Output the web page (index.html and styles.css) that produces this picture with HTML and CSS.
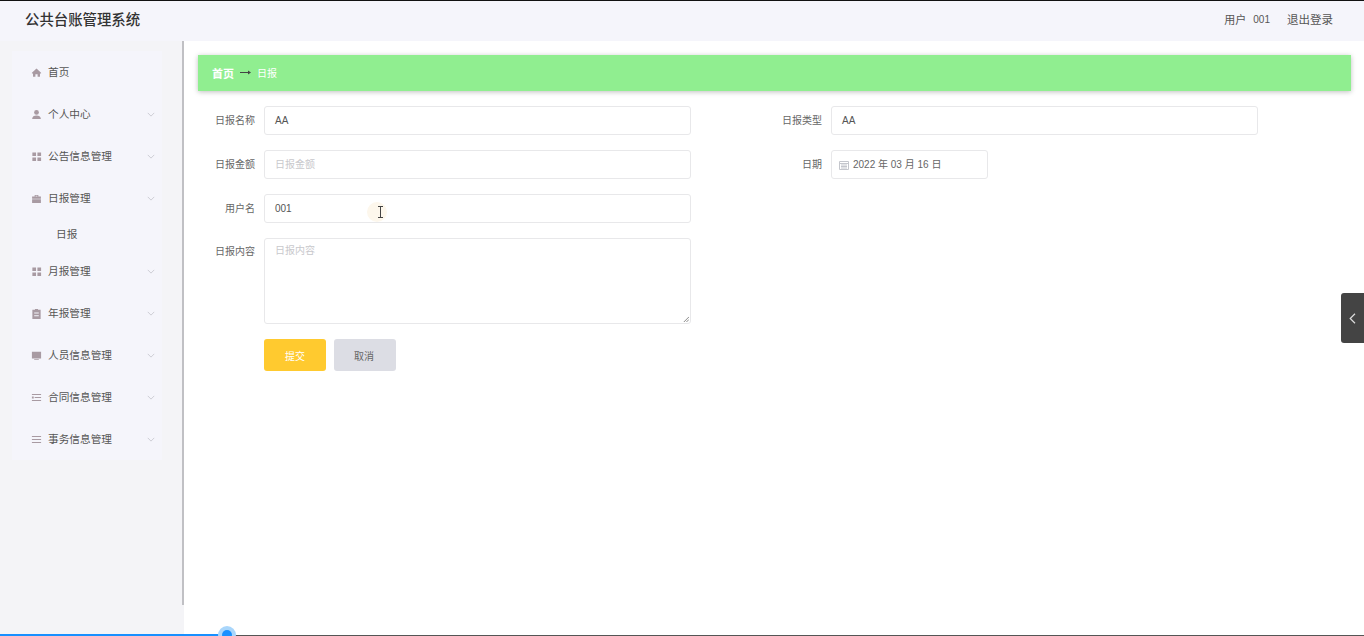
FILE: index.html
```html
<!DOCTYPE html>
<html lang="zh-CN">
<head>
<meta charset="utf-8">
<title>公共台账管理系统</title>
<link rel="stylesheet" href="styles.css">
</head>
<body>
<div class="app">
  <header class="topbar">
    <div class="brand">公共台账管理系统</div>
    <div class="userbox"><div class="who"><span>用户</span><span class="uid">001</span></div><span class="logout">退出登录</span></div>
  </header>
  <div class="body-row">
    <aside class="sidebar">
      <nav class="menu">
        <div class="item"><svg class="ico" viewBox="0 0 12 12"><path d="M6 1.500 1 6.200V7h1.200v3.500h2.600V8h2.400v2.500h2.600V7H11v-.8z"/></svg><span class="label">首页</span></div>
        <div class="item"><svg class="ico" viewBox="0 0 12 12"><circle cx="6" cy="3.700" r="2.600"/><path d="M1.200 10.800C1.400 8.200 3.200 7 6 7s4.600 1.200 4.800 3.800z"/></svg><span class="label">个人中心</span><svg class="chev" viewBox="0 0 10 6"><path d="M1 1l4 4 4-4"/></svg></div>
        <div class="item"><svg class="ico" viewBox="0 0 12 12"><path d="M1.500 1.500h4v4h-4zM7 1.500h4v4H7zM1.500 7h4v4h-4zM7 7h4v4H7z"/></svg><span class="label">公告信息管理</span><svg class="chev" viewBox="0 0 10 6"><path d="M1 1l4 4 4-4"/></svg></div>
        <div class="item"><svg class="ico" viewBox="0 0 12 12"><path d="M4 2.200h4v1.500h2.800v2.500H1.200V3.700H4zM5 3v.7h2V3zM1.200 6.900h9.600v3.900H1.200z"/></svg><span class="label">日报管理</span><svg class="chev" viewBox="0 0 10 6"><path d="M1 1l4 4 4-4"/></svg></div>
        <div class="sub">日报</div>
        <div class="item"><svg class="ico" viewBox="0 0 12 12"><path d="M1.500 1.500h4v4h-4zM7 1.500h4v4H7zM1.500 7h4v4h-4zM7 7h4v4H7z"/></svg><span class="label">月报管理</span><svg class="chev" viewBox="0 0 10 6"><path d="M1 1l4 4 4-4"/></svg></div>
        <div class="item"><svg class="ico" viewBox="0 0 12 12"><path fill-rule="evenodd" d="M4.300 1h3.400v1H10.500v10h-9V2h2.800zM3.500 5v1h5V5zM3.500 8v1h5V8z"/></svg><span class="label">年报管理</span><svg class="chev" viewBox="0 0 10 6"><path d="M1 1l4 4 4-4"/></svg></div>
        <div class="item"><svg class="ico" viewBox="0 0 12 12"><path d="M1 1.800h10v7.400H1zM3.500 10h5v1h-5z"/></svg><span class="label">人员信息管理</span><svg class="chev" viewBox="0 0 10 6"><path d="M1 1l4 4 4-4"/></svg></div>
        <div class="item"><svg class="ico" viewBox="0 0 12 12"><path d="M1 2.300h10v1H1zM4 5.500h7v1H4zM1 8.700h10v1H1zM1 5h2v2H1z"/></svg><span class="label">合同信息管理</span><svg class="chev" viewBox="0 0 10 6"><path d="M1 1l4 4 4-4"/></svg></div>
        <div class="item"><svg class="ico" viewBox="0 0 12 12"><path d="M1 2.300h10v1H1zM1 5.500h10v1H1zM1 8.700h10v1H1z"/></svg><span class="label">事务信息管理</span><svg class="chev" viewBox="0 0 10 6"><path d="M1 1l4 4 4-4"/></svg></div>
      </nav>
      <div class="scrolltrack"><div class="scrollthumb"></div></div>
    </aside>
    <main class="content">
      <div class="crumb"><span class="crumb-home">首页</span><svg class="crumb-arrow" viewBox="0 0 11 7"><path d="M0 3h8V1.500L11 3.500 8 5.500V4H0z"/></svg><span class="crumb-cur">日报</span></div>
      <form class="form">
        <div class="field"><label>日报名称</label><div class="input">AA</div></div>
        <div class="field"><label>日报类型</label><div class="input">AA</div></div>
        <div class="field"><label>日报金额</label><div class="input ph">日报金额</div></div>
        <div class="field"><label>日期</label><div class="input date"><svg class="cal" viewBox="0 0 10 10"><path d="M.5 1.500h9v8h-9zM.5 3.500h9M2 5h6M2 6.500h6M2 8h6"/></svg>2022 年 03 月 16 日</div></div>
        <div class="field"><label>用户名</label><div class="input">001</div></div>
        <div class="spacer"></div>
        <div class="field tall"><label>日报内容</label><div class="input area ph">日报内容<svg class="grip" viewBox="0 0 7 7"><path d="M1 7l6-6M4 7l3-3"/></svg></div></div>
        <div class="spacer"></div>
        <div class="actions"><div class="btn ok">提交</div><div class="btn no">取消</div></div>
      </form>
    </main>
  </div>
</div>
<div class="cursor"><div class="halo"></div><svg class="ibeam" viewBox="0 0 7 12"><path d="M1 .5h5M3.500.5v11M1 11.500h5"/></svg></div>
<div class="drawer"><svg viewBox="0 0 7 11"><path d="M6 .8 1.200 5.500 6 10.200"/></svg></div>
<div class="progress"><div class="played"></div><div class="rest"></div><div class="knob"></div></div>
</body>
</html>
```
FILE: styles.css
```css
* { box-sizing: border-box; }
html, body { margin: 0; height: 636px; overflow: hidden; background: #fff; }
body { font-family: "Liberation Sans", "Noto Sans CJK SC", sans-serif; font-size: 10px; color: #666; }
.app { height: 636px; display: flex; flex-direction: column; border-top: 1px solid #111; }
.topbar { height: 40px; flex: none; background: #f5f5fb; display: flex; align-items: center; justify-content: space-between; padding: 0 31px 4px 25px; }
.brand { font-family: "Noto Sans CJK SC", sans-serif; font-size: 14.400px; font-weight: 500; color: #333; padding-bottom: 2px; }
.userbox { display: flex; align-items: center; gap: 17px; color: #555; }
.who { display: flex; align-items: center; gap: 7px; font-size: 11px; }
.uid { font-size: 10px; }
.logout { font-size: 11.500px; }
.body-row { flex: 1; display: flex; min-height: 0; }
.sidebar { width: 184px; flex: none; background: #f4f4f7; display: flex; padding: 10px 0 0 12px; position: relative; }
.menu { width: 150px; height: 409px; background: #f5f5fb; font-size: 10.670px; }
.scrolltrack { position: absolute; right: 0; top: 0; bottom: 0; width: 2px; background: #f4f4f7; }
.scrollthumb { height: 564px; width: 2px; background: #c0c0c4; }
.item { height: 42px; display: flex; align-items: center; padding-left: 19px; color: #555; }
.ico { width: 11px; height: 11px; fill: #a89aa2; flex: none; margin-right: 6px; }
.label { flex: 1; padding-bottom: 2px; }
.chev { width: 8px; height: 5px; fill: none; stroke: #c5c5cb; stroke-width: 1; margin-right: 7px; }
.sub { height: 31px; line-height: 31px; padding-left: 44px; color: #555; }
.content { flex: 1; padding: 14px 13px 0 14px; min-width: 0; }
.crumb { height: 36px; background: #90ee90; box-shadow: 0 1px 5px rgba(0,0,0,.25); display: flex; align-items: center; padding: 0 14px 1px; color: #fff; }
.crumb-home { font-weight: 700; font-size: 11px; }
.crumb-arrow { width: 11px; height: 7px; fill: #444; margin: 0 6px 0 6px; }
.form { display: grid; grid-template-columns: 567px 567px; row-gap: 15px; margin-top: 15px; }
.field { display: flex; }
.field label { width: 57px; margin-right: 9px; text-align: right; line-height: 29px; color: #666; }
.input { width: 427px; height: 29px; border: 1px solid #e8e8ea; border-radius: 3px; background: #fff; padding: 0 10px; line-height: 27px; color: #555; position: relative; }
.ph { color: #c8c8cc; }
.date { width: 157px; display: flex; align-items: center; padding-left: 7px; color: #666; }
.cal { width: 10px; height: 10px; fill: none; stroke: #c4c6cc; stroke-width: 1; margin-right: 4px; flex: none; }
.tall { height: 86px; }
.tall label { line-height: 28px; }
.area { height: 86px; line-height: 24px; }
.grip { position: absolute; right: 1px; bottom: 1px; width: 6px; height: 6px; fill: none; stroke: #777; stroke-width: 1; }
.actions { grid-column: 1 / -1; display: flex; gap: 8px; padding-left: 66px; }
.btn { width: 62px; height: 32px; border-radius: 3px; display: flex; align-items: center; justify-content: center; }
.ok { background: #ffca2f; color: #fff; }
.no { background: #dcdde4; color: #666; padding-right: 2px; }
.cursor { position: absolute; left: 367px; top: 202px; width: 20px; height: 20px; }
.halo { width: 20px; height: 20px; border-radius: 50%; background: #fdf7ec; }
.ibeam { position: absolute; left: 10px; top: 4px; width: 7px; height: 12px; fill: none; stroke: #444; stroke-width: 1; }
.drawer { position: absolute; left: 1341px; top: 293px; width: 23px; height: 50px; background: #444; border-radius: 3px 0 0 3px; display: flex; align-items: center; justify-content: center; }
.drawer svg { width: 7px; height: 11px; fill: none; stroke: #ddd; stroke-width: 1.200; }
.progress { position: absolute; left: 0; right: 0; bottom: 0; height: 2px; display: flex; }
.played { width: 227px; background: #1890ff; }
.rest { flex: 1; background: #555; height: 1px; margin-top: 1px; }
.knob { position: absolute; left: 222px; top: -4px; width: 10px; height: 10px; border-radius: 50%; background: #1890ff; box-shadow: 0 0 0 4px #a9d6fb; }
```
